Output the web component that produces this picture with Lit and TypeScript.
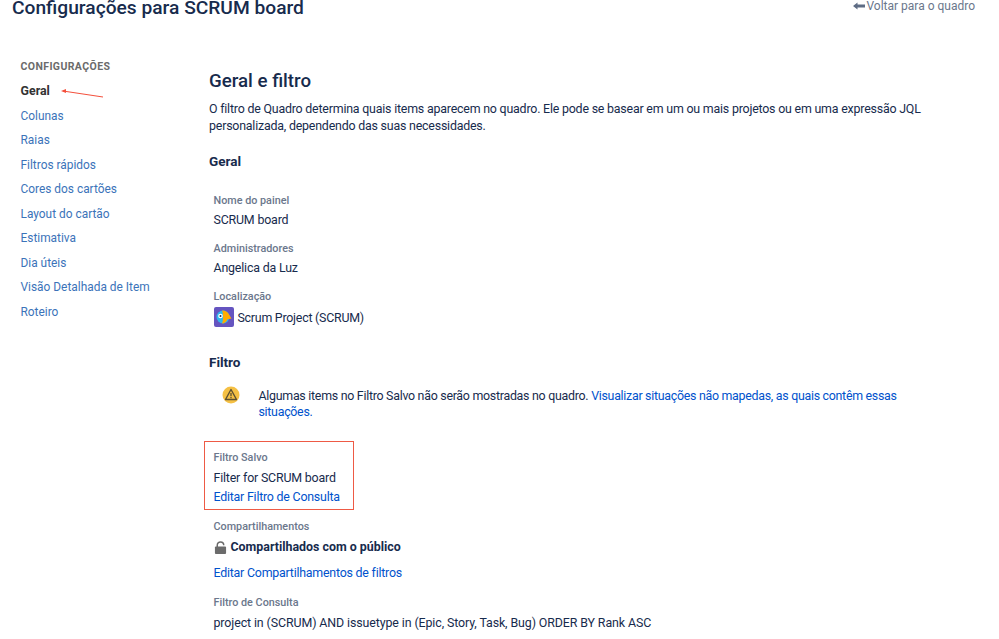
import { LitElement, html, css } from "lit";
import { customElement } from "lit/decorators.js";

const NAV = ["Colunas","Raias","Filtros rápidos","Cores dos cartões","Layout do cartão","Estimativa","Dia úteis","Visão Detalhada de Item","Roteiro"];

@customElement("app-root")
export class AppRoot extends LitElement {
  static styles = css`
    :host { display: block; width: 999px; height: 639px; overflow: hidden; position: relative; background: #fff; font-family: Roboto, "Liberation Sans", sans-serif; font-size: 12.4px; letter-spacing: -.1px; color: #172b4d; }
    .top { display: flex; justify-content: space-between; align-items: flex-start; padding: 0 24px 0 12px; height: 40px; margin-top: -6px; }
    h1 { margin: 0; font-size: 19.2px; font-weight: 500; letter-spacing: 0; line-height: 28px; color: #172b4d; }
    .back { display: flex; align-items: center; gap: 1px; color: #6b778c; font-size: 12px; letter-spacing: 0; line-height: 24px; }
    .cols { display: flex; padding-top: 26px; }
    nav { width: 209px; flex: none; padding-left: 20.5px; box-sizing: border-box; font-size: 11.9px; letter-spacing: 0; }
    .navh { font-size: 10.5px; font-weight: 700; color: #6b6b6b; letter-spacing: .4px; line-height: 14px; margin-bottom: 5px; }
    .ni { line-height: 24.55px; color: #3b73b9; }
    .ni.on { color: #333; font-weight: 700; font-size: 12.4px; }
    main { width: 725px; }
    h2 { margin: 0; font-size: 18.7px; font-weight: 500; letter-spacing: 0; line-height: 26px; padding-top: 8px; }
    p { margin: 6px 0 0; line-height: 17px; letter-spacing: -.2px; }
    h3 { margin: 0; font-size: 13.5px; font-weight: 700; letter-spacing: 0; line-height: 18px; }
    .h-geral { margin-top: 18px; }
    .h-filtro { margin-top: 26px; }
    .lab { color: #6b778c; font-size: 10.8px; font-weight: 500; letter-spacing: 0; line-height: 14px; }
    .val { line-height: 18px; margin-top: 3px; letter-spacing: -.18px; }
    a { color: #0052cc; text-decoration: none; letter-spacing: -.22px; }
    .f { padding-left: 4.5px; margin-top: 13px; }
    .f.first { margin-top: 24px; }
    .f.after-box { margin-top: 10px; }
    .f.last { margin-top: 14px; }
    .loc { display: flex; align-items: center; gap: 4px; margin-top: 3px; letter-spacing: -.24px; }
    .warn { display: flex; padding-left: 12.5px; gap: 19px; margin-top: 15px; }
    .warn svg { flex: none; }
    .warn-text { padding-top: 2px; line-height: 16px; width: 660px; letter-spacing: -.27px; }
    .warn-text a { letter-spacing: -.28px; }
    .boxwrap { padding-left: 5px; margin-top: 21px; }
    .box { border: 1px solid #ee5a45; width: 150px; height: 69px; box-sizing: border-box; margin-left: -10px; padding: 9px 0 0 8.5px; white-space: nowrap; }
    .box .val { margin-top: 4px; }
    .box .val.link { margin-top: 1px; }
    .share { display: flex; align-items: center; gap: 4px; font-weight: 700; line-height: 18px; margin-top: 4px; letter-spacing: 0; }
    .share-link { margin-top: 8px; }
    .val.query { margin-top: 4px; letter-spacing: -.1px; }
    .arrow { position: absolute; left: 60px; top: 88px; }
  `;
  render() {
    return html`
      <div class="top"><h1>Configurações para SCRUM board</h1>
        <div class="back"><svg width="12" height="8" viewBox="0 0 12 8"><path d="M0 4 4.500 .5V2.500H12V5.500H4.500V7.500Z" fill="#5e6c84"/></svg>Voltar para o quadro</div></div>
      <div class="cols">
        <nav><div class="navh">CONFIGURAÇÕES</div><div class="ni on">Geral</div>${NAV.map(n => html`<div class="ni">${n}</div>`)}</nav>
        <main>
          <h2>Geral e filtro</h2>
          <p>O filtro de Quadro determina quais items aparecem no quadro. Ele pode se basear em um ou mais projetos ou em uma expressão JQL personalizada, dependendo das suas necessidades.</p>
          <h3 class="h-geral">Geral</h3>
          <div class="f first"><div class="lab">Nome do painel</div><div class="val">SCRUM board</div></div>
          <div class="f"><div class="lab">Administradores</div><div class="val">Angelica da Luz</div></div>
          <div class="f"><div class="lab">Localização</div><div class="loc">
            <svg width="20" height="20" viewBox="0 0 20 20"><rect width="20" height="20" rx="2" fill="#6554c0"/><circle cx="9" cy="10" r="6.500" fill="#2fb8f0"/><path d="M8 3.500c4 0 6 2 7 4l2.500 4-4 .8c-1 2.500-3 4.200-5.500 4.200 1.500-3 1.500-10 0-13Z" fill="#ffab00"/><circle cx="6.500" cy="9" r="2.300" fill="#fff"/><circle cx="6.500" cy="9" r="1" fill="#172b4d"/></svg>
            Scrum Project (SCRUM)</div></div>
          <h3 class="h-filtro">Filtro</h3>
          <div class="warn">
            <svg width="18" height="18" viewBox="0 0 18 18"><circle cx="9" cy="9" r="8.500" fill="#f5c044"/><path d="M9 3.500 14.500 13.500H3.500Z" fill="none" stroke="#5e5030" stroke-width="1.400" stroke-linejoin="round"/><path d="M9 7v3.200M9 11v1.200" stroke="#5e5030" stroke-width="1.300"/></svg>
            <div class="warn-text">Algumas items no Filtro Salvo não serão mostradas no quadro. <a>Visualizar situações não mapedas, as quais contêm essas situações.</a></div></div>
          <div class="boxwrap"><div class="box"><div class="lab">Filtro Salvo</div><div class="val">Filter for SCRUM board</div><div class="val link"><a>Editar Filtro de Consulta</a></div></div></div>
          <div class="f after-box"><div class="lab">Compartilhamentos</div><div class="share">
            <svg width="13" height="13" viewBox="0 0 14 14"><path d="M3.500 7V4.500a3.500 3.500 0 0 1 7 0" fill="none" stroke="#6b6b6b" stroke-width="1.600"/><rect x="1" y="6" width="12" height="8" rx="1" fill="#6b6b6b"/></svg>
            Compartilhados com o público</div><div class="val share-link"><a>Editar Compartilhamentos de filtros</a></div></div>
          <div class="f last"><div class="lab">Filtro de Consulta</div><div class="val query">project in (SCRUM) AND issuetype in (Epic, Story, Task, Bug) ORDER BY Rank ASC</div></div>
        </main>
      </div>
      <svg class="arrow" width="46" height="12" viewBox="0 0 46 12"><path d="M3 3 43 9" stroke="#f4503c" stroke-width="1"/><path d="M1 3 6 1V5Z" fill="#f4503c"/></svg>`;
  }
}
